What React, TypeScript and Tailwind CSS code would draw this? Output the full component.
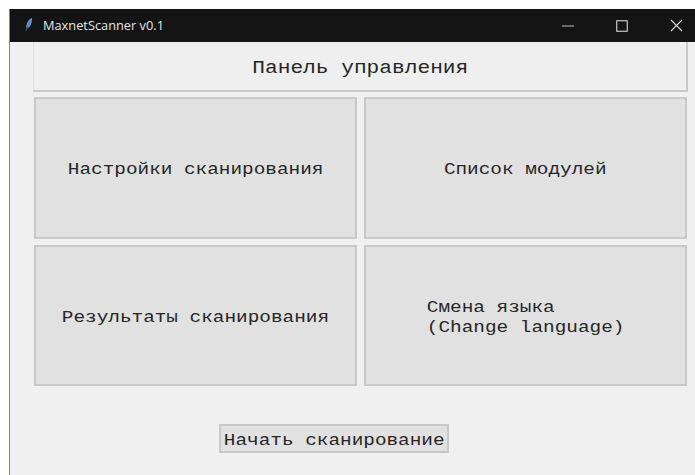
import React from "react";

const mono = "font-['Liberation_Mono','Courier_New',monospace]";

function Tile({ children }: { children: React.ReactNode }) {
  return (
    <button
      className={`flex items-center justify-center pt-1 bg-[#e1e1e1] border-2 border-[#c9c9c9] text-[#262626] ${mono}`}
    >
      {children}
    </button>
  );
}

// Courier-style face drawn wider than its natural proportions
function Wide({ children, className = "" }: { children: React.ReactNode; className?: string }) {
  return <span className={`inline-block whitespace-pre scale-x-[1.21] ${className}`}>{children}</span>;
}

export default function App() {
  return (
    <div className="w-[695px] h-[475px] bg-white pt-[9px] overflow-hidden">
      <div className="h-[466px] ml-[9px] border-l border-[#6f8ba3] bg-[#f0f0f0] flex flex-col">
        <header className="h-[33px] shrink-0 bg-[#141414] flex items-center text-[#e6e6e6]">
          <svg width="10" height="15" viewBox="0 0 9 15" className="ml-[14px] mb-[2px]">
            <path d="M7.5 1 C4 2 2 6 1.6 10.5 L1.2 14 L2.8 11.4 C6 10.4 8 5 7.5 1Z" fill="#5f8fc8" />
            <path d="M1.6 10.5 L1.2 14 L2.8 11.4 L3.5 9Z" fill="#2f4a66" />
          </svg>
          <span className="ml-[9px] text-[12.8px] font-['Open_Sans','Noto_Sans',sans-serif]">MaxnetScanner v0.1</span>
          <div className="ml-auto flex items-center">
            <svg width="12" height="12" viewBox="0 0 12 12" className="mr-[42px]">
              <path d="M0 6 H12" stroke="#9a9a9a" strokeWidth="1.3" />
            </svg>
            <svg width="12" height="12" viewBox="0 0 12 12" className="mr-[42px]">
              <rect x="0.75" y="0.75" width="10.5" height="10.5" fill="none" stroke="#d8d8d8" strokeWidth="1.1" />
            </svg>
            <svg width="13" height="13" viewBox="0 0 13 13" className="mr-[12px]">
              <path d="M1 1 L12 12 M12 1 L1 12" stroke="#d8d8d8" strokeWidth="1.1" />
            </svg>
          </div>
        </header>

        <div className="ml-[23px] w-[655px] h-[50px] shrink-0 flex items-center justify-center pt-1 bg-[#efefef] border-r-2 border-b-2 border-[#c9c9c9] border-l border-l-[#e2e2e2] text-[#262626]">
          <span className={`text-[17.5px] ${mono}`}>
            <Wide>Панель управления</Wide>
          </span>
        </div>

        <div className="ml-[24px] mt-[5px] w-[654px] grid grid-cols-[323px_323px] grid-rows-[142px_141px] gap-x-[7px] gap-y-[6px] text-[16px]">
          <Tile><Wide>Настройки сканирования</Wide></Tile>
          <Tile><Wide>Список модулей</Wide></Tile>
          <Tile><Wide>Результаты сканирования</Wide></Tile>
          <Tile><Wide className="leading-[20px] text-left">{"Смена языка\n(Change language)"}</Wide></Tile>
        </div>

        <div className="ml-[209px] mt-[38px]">
          <button className={`w-[230px] h-[29px] flex items-center justify-center pt-1 bg-[#e1e1e1] border-2 border-[#c9c9c9] text-[#262626] text-[16px] ${mono}`}>
            <Wide>Начать сканирование</Wide>
          </button>
        </div>
      </div>
    </div>
  );
}
